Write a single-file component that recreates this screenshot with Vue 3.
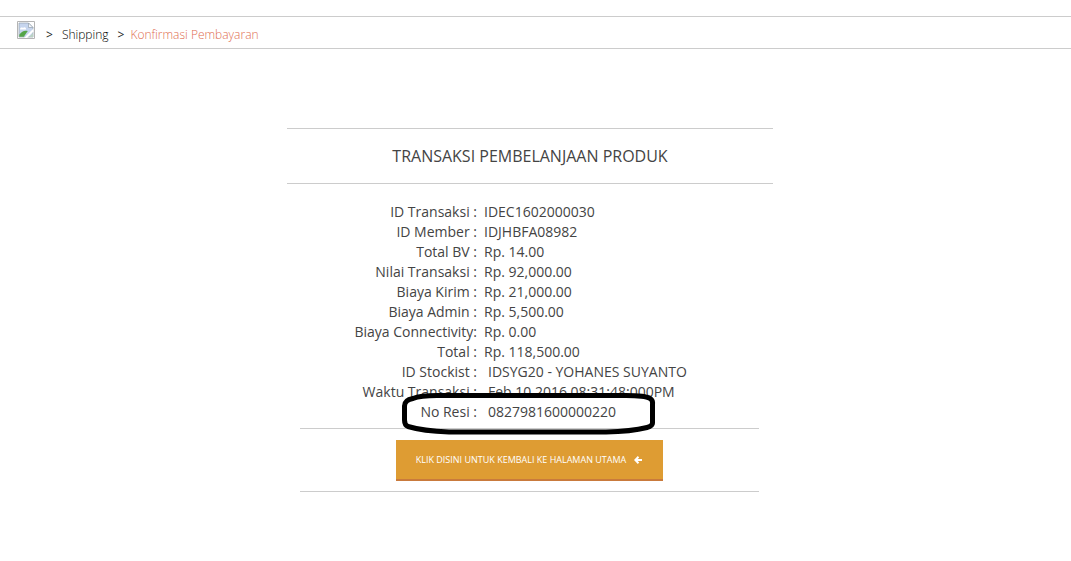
<script setup>
const rows = [
  { label: 'ID Transaksi :', value: 'IDEC1602000030' },
  { label: 'ID Member :', value: 'IDJHBFA08982' },
  { label: 'Total BV :', value: 'Rp. 14.00' },
  { label: 'Nilai Transaksi :', value: 'Rp. 92,000.00' },
  { label: 'Biaya Kirim :', value: 'Rp. 21,000.00' },
  { label: 'Biaya Admin :', value: 'Rp. 5,500.00' },
  { label: 'Biaya Connectivity:', value: 'Rp. 0.00' },
  { label: 'Total :', value: 'Rp. 118,500.00' },
  { label: 'ID Stockist :', value: 'IDSYG20 - YOHANES SUYANTO', inset: true },
  { label: 'Waktu Transaksi :', value: 'Feb 10 2016 08:31:48:000PM', inset: true },
  { label: 'No Resi :', value: '0827981600000220', inset: true, marked: true },
]
</script>

<template>
  <div class="page">
    <nav class="crumbs" aria-label="Breadcrumb">
      <a class="home" href="#" aria-label="Home">
        <svg width="18" height="18" viewBox="0 0 18 18">
          <path d="M.5.5h17v17H.5z" fill="#fff" stroke="#b4b4b4" />
          <path d="M2 2h9.500l4.500 4.500V16H2z" fill="#c6d5ee" stroke="#93a0ae" stroke-width=".7" />
          <path d="M3 8.500c0-2 2-2.500 3-1.500 1-1.500 3.500-.5 3 1.500z" fill="#fff" />
          <path d="M2.300 15.700v-2c2.500-3.500 5-4.500 8.500-3.700l-4 5.700z" fill="#55a548" />
          <path d="M11.500 2v4.500H16z" fill="#f5f7fa" stroke="#93a0ae" stroke-width=".7" />
          <path d="M7 17 16.500 7.500v3L10 17z" fill="#fff" />
          <path d="M12 16l4-4v4z" fill="#b9d2c2" />
        </svg>
      </a>
      <span class="sep first">&gt;</span>
      <a class="crumb" href="#">Shipping</a>
      <span class="sep">&gt;</span>
      <span class="current">Konfirmasi Pembayaran</span>
    </nav>

    <main class="receipt">
      <h1>TRANSAKSI PEMBELANJAAN PRODUK</h1>
      <div class="body">
        <table>
          <tbody>
            <tr v-for="row in rows" :key="row.label">
              <th scope="row">{{ row.label }}</th>
              <td :class="{ inset: row.inset, marked: row.marked }">
                {{ row.value }}
                <svg v-if="row.marked" class="ring" width="256" height="43" viewBox="0 0 256 43" aria-hidden="true">
                  <path d="M12 6.500C18 4 26 3.500 36 3.500H225C238 3.500 246 4.500 249 6.500Q252 8 251.500 12V30Q252 34 246 35.500Q230 39.500 205 40H48Q22 39 7 34.500Q3.500 33 3.500 28V14Q3.500 8 12 6.500z" fill="none" stroke="#000" stroke-width="5" />
                </svg>
              </td>
            </tr>
          </tbody>
        </table>
        <div class="actions">
          <a class="back" href="#">
            KLIK DISINI UNTUK KEMBALI KE HALAMAN UTAMA
            <svg width="8" height="8" viewBox="0 0 8 8" aria-hidden="true">
              <path d="M4.500.7 1.300 4l3.200 3.300M1.500 4H8" fill="none" stroke="#fff" stroke-width="2" />
            </svg>
          </a>
        </div>
      </div>
    </main>
  </div>
</template>

<style>
body {
  margin: 0;
  background: #fff;
}
</style>

<style scoped>
.page {
  padding-top: 16px;
  font-family: "Open Sans", "Noto Sans", sans-serif;
  font-weight: 400;
  color: #444;
}
.crumbs {
  display: flex;
  align-items: center;
  height: 31px;
  padding-left: 17px;
  border-top: 1px solid #ccc;
  border-bottom: 1px solid #ccc;
  font-size: 12px;
  font-weight: 300;
  line-height: 16px;
}
.home {
  display: flex;
  margin-bottom: 5px;
}
.crumbs > span,
.crumb {
  margin-top: 4px;
}
.crumb {
  color: #000;
  text-decoration: none;
}
.sep {
  margin: 0 6px 0 9px;
  color: #222;
  font-weight: 400;
}
.sep.first {
  margin-left: 11px;
  margin-right: 9px;
}
.current {
  color: #e06c50;
}
.receipt {
  box-sizing: border-box;
  max-width: 497px;
  margin: 79px auto 0;
  padding-right: 11px;
}
h1 {
  margin: 0;
  border-top: 1px solid #ccc;
  border-bottom: 1px solid #ccc;
  font-size: 16px;
  font-weight: 400;
  line-height: 54px;
  text-align: center;
  white-space: nowrap;
}
.body {
  padding: 18px 14px 0 13px;
}
table {
  width: 100%;
  border-collapse: collapse;
  font-size: 14px;
  line-height: 20px;
}
th,
td {
  padding: 0;
  font-weight: 400;
  white-space: nowrap;
}
th {
  width: 177px;
  text-align: right;
}
td {
  padding-left: 7px;
}
td.inset {
  padding-left: 11px;
}
td.marked {
  position: relative;
}
.ring {
  position: absolute;
  top: -10px;
  left: -76px;
}
.actions {
  display: flex;
  justify-content: center;
  margin-top: 6px;
  padding: 11px 0 10px;
  border-top: 1px solid #ccc;
  border-bottom: 1px solid #ccc;
}
.back {
  display: flex;
  align-items: center;
  gap: 8px;
  padding: 0 21px 0 20px;
  border-bottom: 2px solid #c97a3c;
  background: #de9c33;
  color: #fff;
  font-size: 9px;
  line-height: 39px;
  text-decoration: none;
  white-space: nowrap;
}
</style>
